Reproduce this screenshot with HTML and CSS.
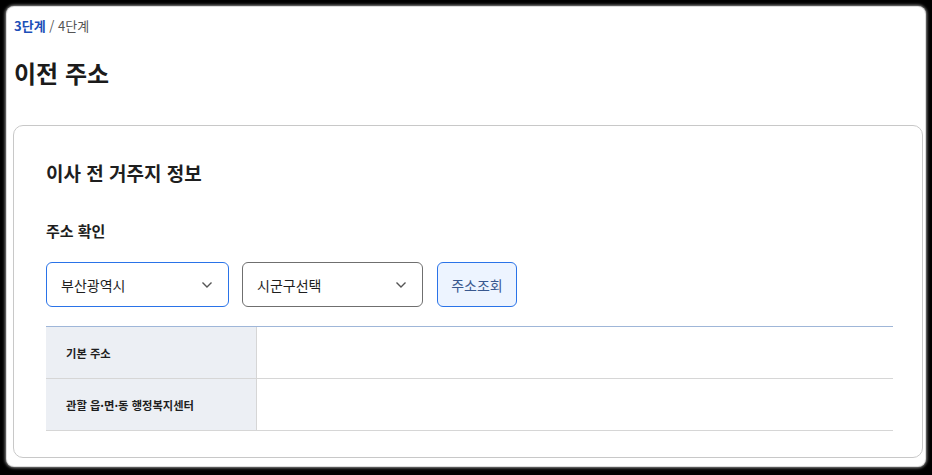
FILE: index.html
```html
<!DOCTYPE html>
<html lang="ko">
<head>
<meta charset="utf-8">
<link rel="stylesheet" href="styles.css">
</head>
<body>
<div class="frame">
  <div class="crumb"><span class="cur">3단계</span><span class="sep"> / </span><span class="next">4단계</span></div>
  <h1 class="title">이전 주소</h1>
  <section class="card">
    <h2 class="card-title">이사 전 거주지 정보</h2>
    <h3 class="label">주소 확인</h3>
    <div class="controls">
      <div class="select active"><span>부산광역시</span><svg class="chev" width="12" height="8" viewBox="0 0 12 8"><path d="M1.5 1.5 L6 6 L10.5 1.5" fill="none" stroke="#555" stroke-width="1.4"/></svg></div>
      <div class="select second"><span>시군구선택</span><svg class="chev" width="12" height="8" viewBox="0 0 12 8"><path d="M1.5 1.5 L6 6 L10.5 1.5" fill="none" stroke="#555" stroke-width="1.4"/></svg></div>
      <button class="btn">주소조회</button>
    </div>
    <div class="table">
      <div class="row"><div class="th">기본 주소</div><div class="td"></div></div>
      <div class="row"><div class="th">관할 읍·면·동 행정복지센터</div><div class="td"></div></div>
    </div>
  </section>
</div>
</body>
</html>
```
FILE: styles.css
```css
html, body {
  margin: 0;
  padding: 0;
  background: #000;
  font-family: "Noto Sans CJK KR", "Noto Sans", sans-serif;
  color: #1e1e1e;
}
.frame {
  margin: 7px;
  width: 918px;
  height: 459px;
  background: #fff;
  border-radius: 7px;
  box-shadow: 0 0 0 1px #dcdcdc, 0 0 3px 2px #8a8a8a;
  padding: 10px 2px 0 6px;
  box-sizing: border-box;
  overflow: hidden;
}
.crumb {
  font-size: 13px;
  line-height: 18px;
  margin-left: 1px;
}
.crumb .cur { color: #1d4fb8; font-weight: 700; }
.crumb .sep, .crumb .next { color: #555; }
.title {
  margin: 22px 0 0 1px;
  font-size: 24px;
  line-height: 32px;
  font-weight: 700;
  color: #1b1b1b;
}
.card {
  margin-top: 36px;
  height: 333px;
  border: 1px solid #c8c8c8;
  border-radius: 10px;
  box-sizing: border-box;
  padding: 34px 28px 0 32px;
}
.card-title {
  margin: 0;
  font-size: 19px;
  line-height: 26px;
  font-weight: 700;
  color: #1e1e1e;
}
.label {
  margin: 34px 0 0;
  font-size: 15px;
  line-height: 22px;
  font-weight: 700;
  color: #1e1e1e;
}
.controls {
  display: flex;
  gap: 13px;
  margin-top: 20px;
}
.select {
  height: 45px;
  box-sizing: border-box;
  border: 1px solid #6f6f6f;
  border-radius: 6px;
  display: flex;
  align-items: center;
  justify-content: space-between;
  padding: 0 15px 0 14px;
  font-size: 14px;
  color: #1e1e1e;
}
.select.active { width: 183px; border-color: #2a73e8; }
.select.second { width: 181px; }
.chev { display: block; }
.btn {
  margin-left: 1px;
  width: 80px;
  height: 45px;
  border: 1px solid #2a73e8;
  border-radius: 6px;
  background: #edf4ff;
  color: #39588f;
  font-family: inherit;
  font-size: 14px;
  padding: 0;
}
.table {
  margin-top: 19px;
  border-top: 1px solid #9fb6d8;
  width: 847px;
}
.row {
  display: flex;
  height: 52px;
  border-bottom: 1px solid #d6d6d6;
  box-sizing: border-box;
}
.th {
  width: 211px;
  background: #eceff4;
  border-right: 1px solid #d6d6d6;
  display: flex;
  align-items: center;
  padding-left: 20px;
  box-sizing: border-box;
  font-size: 11.3px;
  font-weight: 700;
  color: #1e1e1e;
}
.td { flex: 1; }
```
